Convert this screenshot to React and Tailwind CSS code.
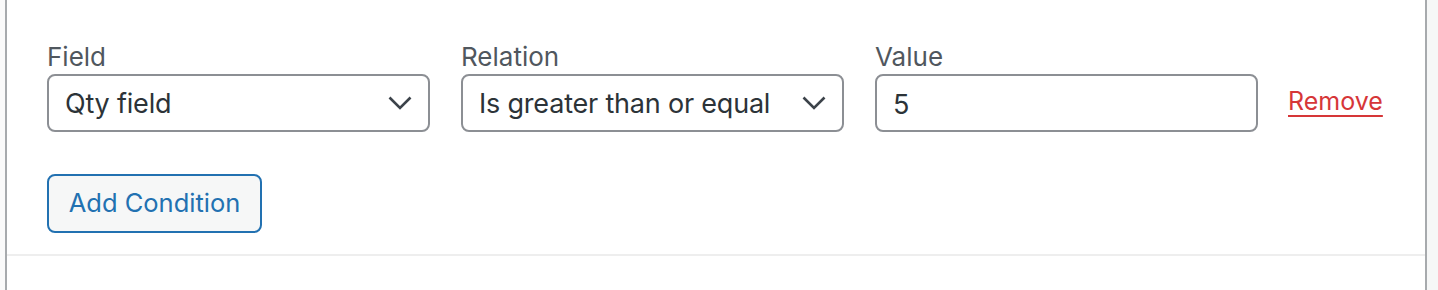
import React, { useState } from "react";

function Chevron() {
  return (
    <svg width="24" height="24" viewBox="0 0 24 24" fill="none" className="shrink-0">
      <path d="M1.5 6.5 L12 17 L22.5 6.5" stroke="#3c434a" strokeWidth="2.6" />
    </svg>
  );
}

function SelectBox({ label, value }) {
  return (
    <div className="flex flex-col w-[383px]">
      <span className="text-[26px] leading-[34px] text-[#50575e]">{label}</span>
      <div className="h-[58px] border-2 border-[#8c8f94] rounded-[8px] flex items-center justify-between pl-[16px] pr-[16px] bg-white">
        <span className="text-[27px] text-[#2c3338] tracking-[-0.2px] pt-[3px]">{value}</span>
        <Chevron />
      </div>
    </div>
  );
}

export default function App() {
  const [qty, setQty] = useState("5");

  return (
    <div className="w-[1438px] h-[290px] flex bg-[#f6f7f7]" style={{ fontFamily: "Inter, 'Noto Sans', sans-serif" }}>
      <div className="w-[5px] bg-[#fafafa]" />
      <div className="flex-1 bg-white border-x-2 border-[#a7aaad] flex flex-col">
        <div className="pl-[40px] pt-[40px] pb-[21px]">
          <div className="flex items-end gap-[31px]">
            <SelectBox label="Field" value="Qty field" />
            <SelectBox label="Relation" value="Is greater than or equal" />
            <div className="flex flex-col w-[383px]">
              <span className="text-[26px] leading-[34px] text-[#50575e]">Value</span>
              <input
                value={qty}
                onChange={(e) => setQty(e.target.value)}
                className="h-[58px] border-2 border-[#8c8f94] rounded-[8px] px-[16px] pt-[3px] text-[27px] text-[#2c3338] outline-none"
              />
            </div>
            <a href="#" className="h-[58px] flex items-center pb-[2px] text-[25px] text-[#d63638] underline underline-offset-[5px] decoration-[1.5px] -ml-[1px]">
              Remove
            </a>
          </div>
          <button className="mt-[42px] h-[59px] w-[215px] border-2 border-[#2271b1] rounded-[8px] bg-[#f6f7f7] text-[#2271b1] text-[25.5px]">
            Add Condition
          </button>
        </div>
        <div className="h-[2px] bg-[#eeeeee]" />
        <div className="flex-1" />
      </div>
      <div className="w-[11px]" />
    </div>
  );
}
